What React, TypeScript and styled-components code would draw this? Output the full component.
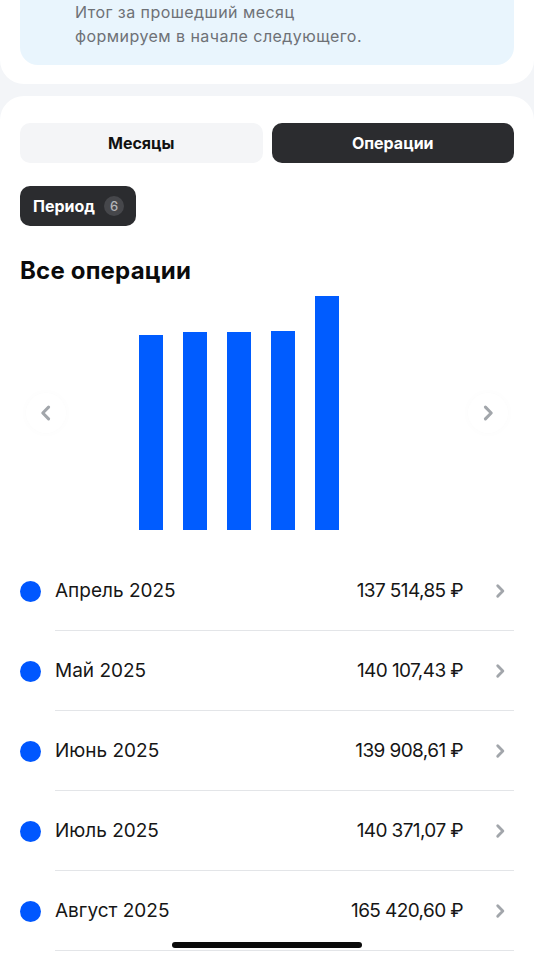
import React from "react";
import styled, { createGlobalStyle } from "styled-components";

const GlobalStyle = createGlobalStyle`
  html, body {
    margin: 0;
    padding: 0;
    background: #f3f5f8;
    font-family: Inter, "Noto Sans", "Liberation Sans", sans-serif;
    -webkit-font-smoothing: antialiased;
  }
  body {
    height: 960px;
    overflow: hidden;
  }
`;

const months = [
  { name: "Апрель 2025", value: 137514.85, label: "137 514,85 ₽" },
  { name: "Май 2025", value: 140107.43, label: "140 107,43 ₽" },
  { name: "Июнь 2025", value: 139908.61, label: "139 908,61 ₽" },
  { name: "Июль 2025", value: 140371.07, label: "140 371,07 ₽" },
  { name: "Август 2025", value: 165420.6, label: "165 420,60 ₽" },
];

const CHART_HEIGHT = 234;

const Chevron = ({
  dir = "right",
  size = 14,
  weight = 2.2,
}: {
  dir?: "left" | "right";
  size?: number;
  weight?: number;
}) => (
  <svg width={size} height={size} viewBox="0 0 14 14" fill="none">
    <path
      d={dir === "right" ? "M5 2.5L9.5 7L5 11.5" : "M9 2.5L4.5 7L9 11.5"}
      stroke="currentColor"
      strokeWidth={weight}
      strokeLinecap="round"
      strokeLinejoin="round"
    />
  </svg>
);

const App: React.FC = () => {
  const max = Math.max(...months.map((m) => m.value));

  return (
    <>
      <GlobalStyle />
      <Page>
        <TopCard>
          <InfoBox>
            <InfoText>Итог за прошедший месяц</InfoText>
            <InfoText>формируем в начале следующего.</InfoText>
          </InfoBox>
        </TopCard>

        <MainCard>
          <Tabs>
            <Tab>Месяцы</Tab>
            <Tab $active>Операции</Tab>
          </Tabs>

          <PeriodChip>
            Период
            <ChipBadge>6</ChipBadge>
          </PeriodChip>

          <Title>Все операции</Title>

          <ChartRow>
            <ArrowButton>
              <Chevron dir="left" size={18} weight={2.4} />
            </ArrowButton>
            <Bars>
              {months.map((m) => (
                <Bar
                  key={m.name}
                  style={{ height: Math.round((m.value / max) * CHART_HEIGHT) }}
                />
              ))}
              <EmptySlot />
            </Bars>
            <ArrowButton>
              <Chevron dir="right" size={18} weight={2.4} />
            </ArrowButton>
          </ChartRow>

          <List>
            {months.map((m) => (
              <MonthRow key={m.name}>
                <Dot />
                <RowBody>
                  <MonthName>{m.name}</MonthName>
                  <Amount>{m.label}</Amount>
                  <RowChevron>
                    <Chevron size={16} weight={2.5} />
                  </RowChevron>
                </RowBody>
              </MonthRow>
            ))}
          </List>
        </MainCard>

        <HomeIndicator />
      </Page>
    </>
  );
};

export default App;

const Page = styled.div`
  position: relative;
  width: 534px;
  height: 960px;
  overflow: hidden;
  display: flex;
  flex-direction: column;
  gap: 12px;
`;

const TopCard = styled.div`
  background: #ffffff;
  border-radius: 0 0 24px 24px;
  padding: 0 20px 19px;
`;

const InfoBox = styled.div`
  background: #e9f5fd;
  border-radius: 0 0 18px 18px;
  padding: 0 20px 17px 55px;
`;

const InfoText = styled.div`
  font-size: 16px;
  line-height: 24px;
  color: #6e7176;
  letter-spacing: 0.45px;
`;

const MainCard = styled.div`
  flex: 1;
  background: #ffffff;
  border-radius: 24px 24px 0 0;
  padding: 27px 20px 0;
  display: flex;
  flex-direction: column;
`;

const Tabs = styled.div`
  display: grid;
  grid-template-columns: 1fr 1fr;
  gap: 9px;
`;

const Tab = styled.div<{ $active?: boolean }>`
  height: 40px;
  border-radius: 10px;
  display: flex;
  align-items: center;
  justify-content: center;
  font-size: 16px;
  font-weight: 700;
  background: ${(p) => (p.$active ? "#2b2c2f" : "#f4f5f7")};
  color: ${(p) => (p.$active ? "#ffffff" : "#111111")};
`;

const PeriodChip = styled.div`
  align-self: flex-start;
  margin-top: 23px;
  height: 40px;
  padding: 0 12px 0 13px;
  border-radius: 10px;
  background: #2b2c2f;
  color: #ffffff;
  font-size: 16px;
  font-weight: 700;
  display: flex;
  align-items: center;
  gap: 9px;
`;

const ChipBadge = styled.span`
  width: 20px;
  height: 20px;
  border-radius: 50%;
  background: #46474b;
  color: #b4b5b8;
  font-size: 13px;
  font-weight: 500;
  display: flex;
  align-items: center;
  justify-content: center;
`;

const Title = styled.div`
  margin-top: 30px;
  font-size: 24px;
  line-height: 30px;
  font-weight: 700;
  color: #0b0b0c;
  letter-spacing: 0.2px;
`;

const ChartRow = styled.div`
  margin-top: 10px;
  height: 234px;
  display: flex;
  align-items: center;
  justify-content: space-between;
  padding: 0 6px;
`;

const ArrowButton = styled.div`
  width: 40px;
  height: 40px;
  border-radius: 50%;
  background: #ffffff;
  box-shadow: 0 0 8px rgba(30, 40, 60, 0.02);
  color: #a2a6ab;
  display: flex;
  align-items: center;
  justify-content: center;
`;

const Bars = styled.div`
  height: 100%;
  display: flex;
  align-items: flex-end;
  gap: 20px;
  margin-left: -12px;
`;

const Bar = styled.div`
  width: 24px;
  background: #005cff;
`;

const EmptySlot = styled.div`
  width: 24px;
`;

const List = styled.div`
  margin-top: 21px;
  display: flex;
  flex-direction: column;
`;

const MonthRow = styled.div`
  height: 80px;
  display: flex;
  align-items: center;
  gap: 14px;
`;

const Dot = styled.div`
  width: 21px;
  height: 21px;
  border-radius: 50%;
  background: #0057ff;
  flex-shrink: 0;
`;

const RowBody = styled.div`
  flex: 1;
  align-self: stretch;
  display: flex;
  align-items: center;
  border-bottom: 1px solid #e3e5e8;
`;

const MonthName = styled.div`
  flex: 1;
  font-size: 19px;
  color: #161616;
`;

const Amount = styled.div`
  font-size: 19px;
  color: #161616;
  letter-spacing: -0.6px;
`;

const RowChevron = styled.div`
  width: 51px;
  display: flex;
  justify-content: flex-end;
  padding-right: 6px;
  box-sizing: border-box;
  color: #a2a6ab;
`;

const HomeIndicator = styled.div`
  position: absolute;
  left: 172px;
  top: 942px;
  width: 190px;
  height: 6px;
  border-radius: 3px;
  background: #0a0a0a;
`;
